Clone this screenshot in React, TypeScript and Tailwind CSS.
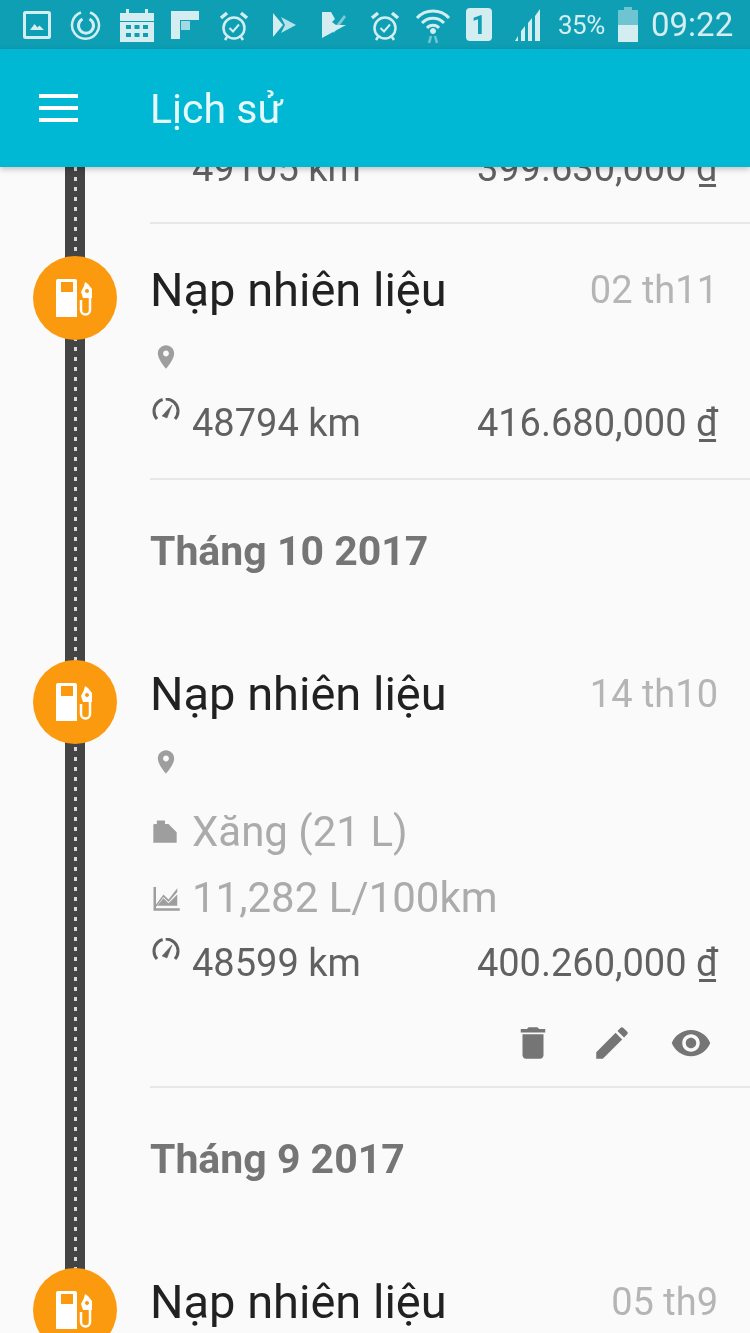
import type { ReactNode } from "react";

function Icon({ d, className }: { d: string; className: string }) {
  return (
    <svg viewBox="0 0 24 24" fill="currentColor" className={className}>
      <path d={d} fillRule="evenodd" />
    </svg>
  );
}

function Alarm() {
  return (
    <svg viewBox="0 0 30 32" fill="none" stroke="currentColor" className="w-[30px] h-[32px]">
      <circle cx="15" cy="18" r="10.5" strokeWidth="2.5" />
      <path d="M10.5 18l3.5 3.5 6-7" strokeWidth="2" />
      <path d="M2 8l6-5M28 8l-6-5" strokeWidth="3.5" />
      <path d="M8 27l-2 3M22 27l2 3" strokeWidth="2.5" />
    </svg>
  );
}

function StatusBar() {
  return (
    <div className="h-[49px] shrink-0 bg-[#0e9fb4] text-[#d3edf1] flex items-center relative">
      <div className="flex items-center pl-[23px] h-full w-full">
        <svg viewBox="0 0 28 28" fill="none" className="w-7 h-7 mr-[19px]">
          <rect x="1.5" y="1.5" width="25" height="25" rx="1" stroke="currentColor" strokeWidth="3" />
          <path d="M7 19l4.5-6 3 3.5 2-2 4.500 4.500z" fill="currentColor" />
        </svg>
        <svg viewBox="0 0 32 32" fill="none" stroke="currentColor" className="w-8 h-8 mr-[17px]">
          <path d="M20 3.500a13.500 13.500 0 1 1-9 0" strokeWidth="2.500" />
          <path d="M19.500 10a7.500 7.500 0 1 1-7 0" strokeWidth="3" />
        </svg>
        <svg viewBox="0 0 36 34" fill="currentColor" className="w-9 h-[34px] mr-[15px]">
          <path d="M1 5h6V1h3v4h16V1h3v4h6v8H1z" />
          <path
            fillRule="evenodd"
            d="M1 14h34v20H1zM7 17v4h5v-4zM15.500 17v4h5v-4zM24 17v4h5v-4zM7 25v4h5v-4zM15.500 25v4h5v-4zM24 25v4h5v-4z"
          />
        </svg>
        <svg viewBox="0 0 30 30" fill="currentColor" className="w-[30px] h-[30px] mr-[19px]">
          <path d="M1 1h28v9H10v19H1z" />
          <path d="M11 11h9v9h-9z" opacity="0.75" />
        </svg>
        <div className="mr-[21px] mt-[2px]"><Alarm /></div>
        <svg viewBox="0 0 28 28" fill="currentColor" className="w-7 h-7 mr-[22px]">
          <path d="M3 2l10 12L3 26z" />
          <path d="M11 6l15 8-15 8 4-8z" opacity="0.85" />
        </svg>
        <svg viewBox="0 0 28 28" fill="currentColor" className="w-7 h-7 mr-[22px]">
          <path d="M2 1l9 0 4 7-3 3 4 3 10 0-24 13z" />
          <path d="M10 13l4 4 10-13 2 2-12 16-6-7z" opacity="0.55" />
        </svg>
        <div className="mr-[15px] mt-[2px]"><Alarm /></div>
        <svg viewBox="0 0 36 38" fill="none" stroke="currentColor" className="w-9 h-[38px] mr-[15px]">
          <path d="M2 12a22 22 0 0 1 32 0" strokeWidth="3" />
          <path d="M7 17a15 15 0 0 1 22 0" strokeWidth="3" />
          <path d="M12 22a8 8 0 0 1 12 0" strokeWidth="3" />
          <circle cx="18" cy="25" r="2.500" fill="currentColor" />
          <path d="M16 30l-2 7M20 30l2 7" strokeWidth="2.500" opacity="0.5" />
        </svg>
        <div className="w-[26px] h-[33px] bg-[#d3edf1] rounded-sm flex items-center justify-center mr-[22px] text-[#0e9fb4] text-[26px] font-bold leading-none">
          1
        </div>
        <svg viewBox="0 0 32 34" fill="currentColor" className="w-8 h-[34px] mr-[12px]">
          <path d="M1 33l3-5v5zM7 33v-10l4-5v15zM14 33V15l4-5v23zM21 33V8l5-7v32z" />
        </svg>
        <span className="text-[26px] leading-none w-[51px] mr-[9px] tracking-[-0.5px]">35%</span>
        <div className="w-[20px] h-[35px] flex flex-col items-center mr-[13px]">
          <div className="w-[8px] h-[3px] bg-[#6fc4d1]" />
          <div className="w-[20px] h-[15px] bg-[#6fc4d1]" />
          <div className="w-[20px] h-[17px] bg-[#d3edf1]" />
        </div>
        <span className="text-[33px] leading-none">09:22</span>
      </div>
    </div>
  );
}

function FuelIcon() {
  return (
    <svg viewBox="0 0 38 40" fill="none" className="w-[38px] h-[40px]">
      <path
        fillRule="evenodd"
        fill="#fff"
        d="M2 1h17a2 2 0 0 1 2 2v36H0V3a2 2 0 0 1 2-2zM5 4v10h12V4z"
      />
      <path d="M25 22v10a4.500 4.500 0 0 0 9 0V16" stroke="#fff" strokeWidth="2.500" />
      <path
        fillRule="evenodd"
        fill="#fff"
        d="M25 14l3-6 1-4 3 2 4 5v9h-9zM31 11a2 2 0 1 0 .01 0z"
      />
    </svg>
  );
}

function GaugeIcon() {
  return (
    <svg viewBox="0 0 28 24" fill="none" stroke="currentColor" className="w-7 h-6 text-[#616161]">
      <path d="M5 21A12 12 0 1 1 23 21" strokeWidth="3" strokeDasharray="24 3 30" />
      <path d="M10 18L20 7l-5 13z" fill="currentColor" strokeWidth="0.5" />
    </svg>
  );
}

function MetaRow({ km, price, className }: { km: string; price: string; className: string }) {
  return (
    <div className={`flex items-center justify-between pr-[32px] ${className}`}>
      <div className="flex items-center">
        <div className="w-[42px] -mt-[26px] flex justify-start pl-[2px]"><GaugeIcon /></div>
        <span className="text-[38px] text-[#616161]">{km}</span>
      </div>
      <span className="text-[38px] text-[#616161]">{price}</span>
    </div>
  );
}

function PinRow({ className }: { className: string }) {
  return (
    <div className={`flex items-center ${className}`}>
      <Icon
        className="w-[28px] h-[28px] text-[#9e9e9e] ml-[2px]"
        d="M12 2C8.130 2 5 5.130 5 9c0 5.250 7 13 7 13s7-7.750 7-13c0-3.870-3.130-7-7-7zm0 9.500c-1.380 0-2.500-1.120-2.500-2.500s1.120-2.500 2.500-2.500 2.500 1.120 2.500 2.500-1.120 2.500-2.500 2.500z"
      />
    </div>
  );
}

function Entry({ date, children }: { date: string; children?: ReactNode }) {
  return (
    <div className="relative pt-[32px]">
      <div className="absolute left-[-117px] top-[32px] w-[84px] h-[84px] rounded-full bg-[#fb9a0f] flex items-center justify-center">
        <FuelIcon />
      </div>
      <div className="flex items-center justify-between h-[68px] pr-[32px]">
        <span className="text-[47px] text-[#212121]">Nạp nhiên liệu</span>
        <span className="text-[38px] text-[#b5b5b5]">{date}</span>
      </div>
      {children}
    </div>
  );
}

function Month({ label }: { label: string }) {
  return (
    <div className="pt-[36px] pb-[40px]">
      <div className="h-[72px] flex items-center text-[41px] font-bold text-[#757575]">{label}</div>
    </div>
  );
}

export default function App() {
  return (
    <div className="w-[750px] h-[1333px] overflow-hidden flex flex-col bg-[#fafafa] font-['Roboto',sans-serif] blur-[0.6px]">
      <StatusBar />
      <header className="relative z-10 h-[118px] shrink-0 bg-[#00b8d4] shadow-[0_2px_6px_rgba(0,0,0,0.25)] flex items-center text-white">
        <div className="w-[150px] pl-[39px] flex flex-col gap-[8px]">
          <div className="w-[39px] h-[4px] bg-white" />
          <div className="w-[39px] h-[4px] bg-white" />
          <div className="w-[39px] h-[4px] bg-white" />
        </div>
        <span className="text-[41px] text-[#e6f9fc] pt-[3px]">Lịch sử</span>
      </header>

      <main className="relative flex-1 overflow-hidden">
        {/* road */}
        <div className="absolute left-[65px] top-0 bottom-0 w-5 bg-[#444] flex justify-center">
          <div className="w-[3px] h-full bg-[repeating-linear-gradient(to_bottom,#d8d8d8_0,#d8d8d8_4px,transparent_4px,transparent_10px)]" />
        </div>

        <div className="ml-[150px] -mt-[32px]">
          <div className="border-b-2 border-[#e8e8e8] pb-[21px]">
            <MetaRow km="49105 km" price="399.630,000 ₫" className="h-[66px]" />
          </div>

          <div className="border-b-2 border-[#e8e8e8] pb-[22px]">
            <Entry date="02 th11">
              <PinRow className="h-[66px]" />
              <MetaRow km="48794 km" price="416.680,000 ₫" className="h-[66px]" />
            </Entry>
          </div>

          <Month label="Tháng 10 2017" />

          <div className="border-b-2 border-[#e8e8e8]">
            <Entry date="14 th10">
              <PinRow className="h-[68px]" />
              <div className="h-[70px] flex items-center text-[42px] text-[#ababab]">
                <Icon
                  className="w-[28px] h-[28px] text-[#9e9e9e] ml-px mr-[13px]"
                  d="M2 22V7a1 1 0 0 1 1-1h2V3h7v3h3l7 7v9z"
                />
                Xăng (21 L)
              </div>
              <div className="h-[62px] flex items-center text-[42px] text-[#ababab]">
                <Icon
                  className="w-[30px] h-[30px] text-[#9e9e9e] ml-px mr-[11px]"
                  d="M2 4h2v14l6-8 4 4 7-9v3l-7 8-4-4-6 8v1h19v2H2zM5 19l5-6 4 4 7-7v9z"
                />
                11,282 L/100km
              </div>
              <MetaRow km="48599 km" price="400.260,000 ₫" className="h-[70px]" />
              <div className="h-[88px] pt-[24px] flex items-start justify-end pr-[38px] gap-[37px] text-[#757575]">
                <Icon
                  className="w-[42px] h-[42px]"
                  d="M6 19c0 1.100.9 2 2 2h8c1.100 0 2-.9 2-2V7H6v12zM19 4h-3.500l-1-1h-5l-1 1H5v2h14V4z"
                />
                <Icon
                  className="w-[42px] h-[42px]"
                  d="M3 17.250V21h3.750L17.810 9.940l-3.750-3.750L3 17.250zM20.710 7.040c.39-.39.39-1.020 0-1.410l-2.340-2.340c-.39-.39-1.020-.39-1.410 0l-1.830 1.830 3.750 3.750 1.830-1.830z"
                />
                <Icon
                  className="w-[42px] h-[42px]"
                  d="M12 4.500C7 4.500 2.730 7.610 1 12c1.730 4.390 6 7.500 11 7.500s9.270-3.110 11-7.500c-1.730-4.390-6-7.500-11-7.500zM12 17c-2.760 0-5-2.240-5-5s2.240-5 5-5 5 2.240 5 5-2.240 5-5 5zm0-8c-1.660 0-3 1.340-3 3s1.340 3 3 3 3-1.340 3-3-1.340-3-3-3z"
                />
              </div>
            </Entry>
          </div>

          <Month label="Tháng 9 2017" />

          <Entry date="05 th9" />
        </div>
      </main>
    </div>
  );
}
